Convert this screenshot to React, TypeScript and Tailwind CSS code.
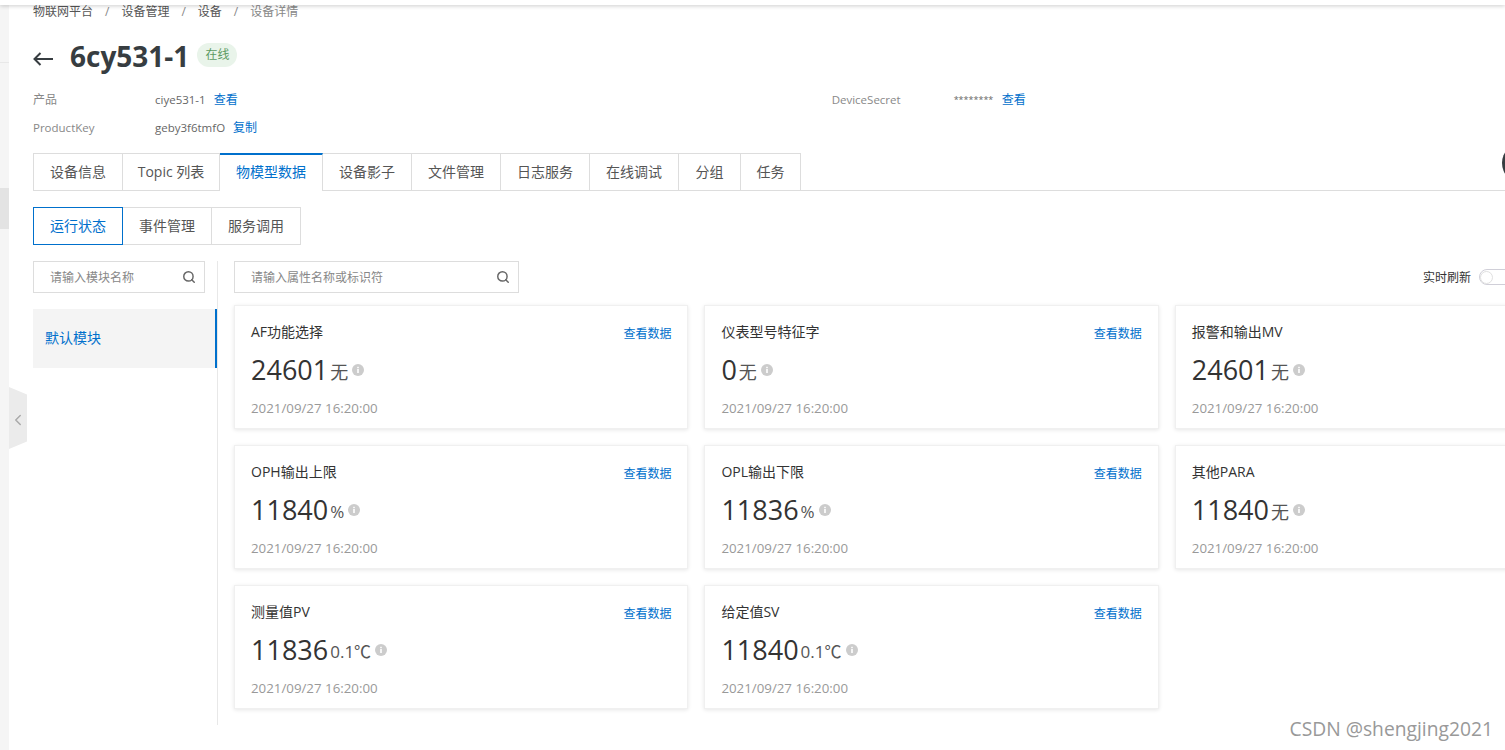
import React from 'react';
import { ChevronLeft, Search } from 'lucide-react';

const tabs = ['设备信息', 'Topic 列表', '物模型数据', '设备影子', '文件管理', '日志服务', '在线调试', '分组', '任务'];
const tabWidths = ['w-[90px]', 'w-[97px]', 'w-[103px]', 'w-[89px]', 'w-[89px]', 'w-[89px]', 'w-[89px]', 'w-[62px]', 'w-[60px]'];
const subTabs = ['运行状态', '事件管理', '服务调用'];

const cards = [
  { title: 'AF功能选择', value: '24601', unit: '无' },
  { title: '仪表型号特征字', value: '0', unit: '无' },
  { title: '报警和输出MV', value: '24601', unit: '无' },
  { title: 'OPH输出上限', value: '11840', unit: '%' },
  { title: 'OPL输出下限', value: '11836', unit: '%' },
  { title: '其他PARA', value: '11840', unit: '无' },
  { title: '测量值PV', value: '11836', unit: '0.1℃' },
  { title: '给定值SV', value: '11840', unit: '0.1℃' },
];

function InfoDot() {
  return (
    <svg viewBox="0 0 12 12" className="w-3 h-3 ml-1 shrink-0">
      <circle cx="6" cy="6" r="6" fill="#cccccc" />
      <rect x="5.2" y="5" width="1.6" height="4" fill="#ffffff" />
      <rect x="5.2" y="2.8" width="1.6" height="1.4" fill="#ffffff" />
    </svg>
  );
}

function PropertyCard({ title, value, unit }: { title: string; value: string; unit: string }) {
  return (
    <div className="h-[124px] bg-white border border-[#f0f0f0] shadow-[0_1px_4px_rgba(0,0,0,0.1)] pt-4 px-4">
      <div className="flex items-center justify-between h-5">
        <span className="text-sm text-[#333]">{title}</span>
        <a className="text-xs text-[#0070cc] pt-[3px]">查看数据</a>
      </div>
      <div className="flex items-center h-9 mt-[10px]">
        <span className="text-[27px] leading-9 text-[#333]">{value}</span>
        <span className={`${unit === '无' ? 'text-[18px]' : 'text-[17px]'} leading-9 text-[#555] ml-[2px] mt-1`}>{unit}</span>
        <InfoDot />
      </div>
      <div className="text-[13.3px] leading-5 text-[#999] mt-[10px]">2021/09/27 16:20:00</div>
    </div>
  );
}

function SearchBox({ placeholder, width }: { placeholder: string; width: string }) {
  return (
    <div className={`${width} h-8 border border-[#dddddd] flex items-center justify-between pl-4 pr-2 bg-white`}>
      <span className="text-xs text-[#888] pt-[2px]">{placeholder}</span>
      <Search className="w-[14px] h-[14px] text-[#666]" strokeWidth={2.5} />
    </div>
  );
}

export default function App() {
  return (
    <div className="relative w-[1505px] h-[750px] overflow-hidden bg-white flex [font-family:'Open_Sans','Noto_Sans_CJK_SC',sans-serif]">
      {/* Left rail */}
      <div className="w-[9px] shrink-0 bg-[#f5f5f5] pt-[62px]">
        <div className="h-px bg-[#e8e8e8]" />
        <div className="h-[41px] bg-[#e3e3e3] mt-[125px]" />
      </div>

      {/* Page */}
      <div className="flex-1 min-w-0 pl-6">
        <div className="flex items-center h-5 mt-[2px] text-xs text-[#555]">
          <span>物联网平台</span>
          <span className="mx-3 text-[#888]">/</span>
          <span>设备管理</span>
          <span className="mx-3 text-[#888]">/</span>
          <span>设备</span>
          <span className="mx-3 text-[#888]">/</span>
          <span className="text-[#888]">设备详情</span>
        </div>

        <div className="flex items-center h-10 mt-[14px]">
          <svg viewBox="0 0 20 14" className="w-5 h-[14px] mr-[17px] mt-[6px]" fill="none" stroke="#373d41" strokeWidth="2">
            <path d="M7.5 1 L1.5 7 L7.5 13 M1.5 7 H20" />
          </svg>
          <h1 className="text-[28px] font-bold text-[#373d41] leading-10">6cy531-1</h1>
          <span className="ml-2 mt-[-2px] h-6 w-10 rounded-full bg-[#e9f4ea] text-xs text-[#5b9a62] flex items-center justify-center">在线</span>
        </div>

        <div className="flex h-7 items-center mt-[10px] text-xs">
          <span className="w-[122px] text-[#888]">产品</span>
          <span className="text-[11.5px] text-[#666]">ciye531-1</span>
          <a className="ml-2 text-[#0070cc]">查看</a>
          <span className="ml-[594px] w-[122px] text-[11.5px] text-[#888]">DeviceSecret</span>
          <span className="w-10 text-[9px] text-[#666]">********</span>
          <a className="ml-2 text-[#0070cc]">查看</a>
        </div>
        <div className="flex h-7 items-center text-xs">
          <span className="w-[122px] text-[11.5px] text-[#888]">ProductKey</span>
          <span className="text-[11.5px] text-[#666]">geby3f6tmfO</span>
          <a className="ml-2 text-[#0070cc]">复制</a>
        </div>

        {/* Tabs */}
        <div className="flex h-[38px] mt-[11px] border-b border-[#dddddd]">
          {tabs.map((tab, i) =>
            i === 2 ? (
              <div key={tab} className={`${tabWidths[i]} h-[38px] pb-[2px] bg-white border-t-2 border-[#0070cc] border-r border-r-[#dddddd] text-sm text-[#0070cc] flex items-center justify-center`}>
                {tab}
              </div>
            ) : (
              <div key={tab} className={`${tabWidths[i]} h-[38px] pb-[2px] border-t border-r border-[#dddddd] ${i === 0 ? 'border-l' : ''} text-sm text-[#555] flex items-center justify-center`}>
                {tab}
              </div>
            ),
          )}
        </div>

        {/* Sub tabs */}
        <div className="flex h-[38px] mt-4">
          {subTabs.map((tab, i) => (
            <div
              key={tab}
              className={`text-sm flex items-center justify-center border ${i === 0 ? 'w-[90px] border-[#0070cc] text-[#0070cc]' : 'w-[89px] border-l-0 border-[#dddddd] text-[#555]'}`}
            >
              {tab}
            </div>
          ))}
        </div>

        {/* Body */}
        <div className="flex mt-4 w-[1486px]">
          <div className="w-[185px] h-[464px] shrink-0 border-r border-[#e8e8e8]">
            <SearchBox placeholder="请输入模块名称" width="w-[172px]" />
            <div className="mt-4 h-[59px] pb-[2px] bg-[#f4f4f4] border-r-2 border-[#0070cc] flex items-center pl-3 text-sm text-[#0070cc]">
              默认模块
            </div>
          </div>
          <div className="pl-4 flex-1 min-w-0">
            <div className="flex items-center justify-between h-8">
              <SearchBox placeholder="请输入属性名称或标识符" width="w-[285px]" />
              <div className="flex items-center">
                <span className="text-xs text-[#333] pt-[2px]">实时刷新</span>
                <div className="ml-2 w-[40px] h-4 rounded-full border border-[#d0cfd8] flex items-center shrink-0">
                  <div className="w-[13px] h-[13px] rounded-full bg-white border border-[#e0e0e0]" />
                </div>
              </div>
            </div>
            <div className="grid grid-cols-[454.4px_454.4px_454.4px] gap-4 mt-3">
              {cards.map((card) => (
                <PropertyCard key={card.title} {...card} />
              ))}
            </div>
          </div>
        </div>
      </div>

      {/* Overlays */}
      <div className="absolute top-0 left-0 right-0 h-[5px] bg-white shadow-[0_1px_4px_rgba(0,0,0,0.2)]" />
      <div className="absolute left-[9px] top-[387px] w-[18px] h-[62px] pt-[3px] bg-[#ebebeb] flex items-center justify-center [clip-path:polygon(0_0,100%_12%,100%_88%,0_100%)]">
        <ChevronLeft className="w-5 h-5 text-[#aaa]" />
      </div>
      <div className="absolute left-[1502px] top-[143px] w-10 h-10 rounded-full bg-[#373d41]" />
      <div className="absolute right-3 top-[715px] text-[19.25px] leading-7 text-[#999] [text-shadow:0_0_2px_#fff]">CSDN @shengjing2021</div>
    </div>
  );
}
